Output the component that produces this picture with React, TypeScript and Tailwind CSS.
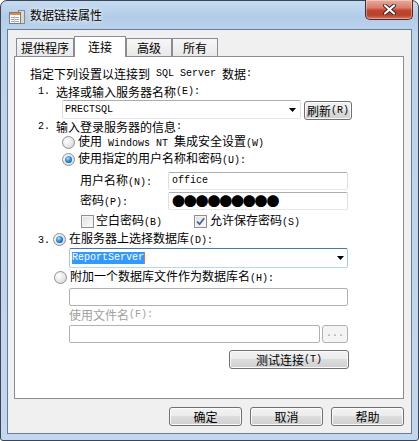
import type { ReactNode } from 'react';

// split text into CJK and ASCII runs; ASCII gets the narrow mono face (6px per char like SimSun)
function T({ s }: { s: string }) {
  const parts = s.split(/([\x20-\x7e]+)/).filter(Boolean);
  return (
    <>
      {parts.map((p, i) =>
        /^[\x20-\x7e]+$/.test(p) ? (
          <span key={i} className="whitespace-pre font-['Liberation_Mono',monospace] text-[10px]">
            {p}
          </span>
        ) : (
          <span key={i}>{p}</span>
        ),
      )}
    </>
  );
}

const btn =
  'flex items-center justify-center rounded-[3px] border border-[#707070] bg-[linear-gradient(to_bottom,#f2f2f2_0%,#ebebeb_50%,#dddddd_50%,#cfcfcf_100%)] shadow-[inset_0_0_0_1px_#fbfbfb] leading-[16px]';

const textBox =
  'rounded-[2px] border border-[#abadb3] border-l-[#dbdfe6] border-r-[#dbdfe6] border-b-[#e3e9ef] bg-white';

function Arrow() {
  return (
    <svg width="7" height="4" viewBox="0 0 7 4">
      <polygon points="0,0 7,0 3.5,4" fill="#000" />
    </svg>
  );
}

function Radio({ checked }: { checked?: boolean }) {
  return (
    <div className="flex h-[13px] w-[13px] shrink-0 items-center justify-center rounded-full border border-[#8f8f8f] bg-[radial-gradient(circle_at_35%_35%,#ffffff,#e4e4e4_60%,#cfcfcf)]">
      {checked && (
        <div className="h-[7px] w-[7px] rounded-full bg-[radial-gradient(circle_at_40%_35%,#a8e0ff,#2f8fdc_45%,#0d3a78)]" />
      )}
    </div>
  );
}

function Check({ checked }: { checked?: boolean }) {
  return (
    <div className="flex h-[13px] w-[13px] shrink-0 items-center justify-center border border-[#8f8f8f] bg-[linear-gradient(135deg,#dcdcdc,#ffffff)] shadow-[inset_0_0_0_1px_#f4f4f4]">
      {checked && (
        <svg width="11" height="11" viewBox="0 0 11 11">
          <path d="M2 5.5 L4.5 8.2 L9.2 2.2" stroke="#4d62a3" strokeWidth="1.8" fill="none" />
        </svg>
      )}
    </div>
  );
}

function Row({ className, children }: { className: string; children: ReactNode }) {
  return <div className={`flex items-center ${className}`}>{children}</div>;
}

function Tab({ label, active, w }: { label: string; active?: boolean; w: string }) {
  return active ? (
    <div
      className={`relative z-10 -mb-px flex h-[21px] items-center justify-center border border-b-0 border-[#898c95] bg-white leading-[16px] ${w}`}
    >
      {label}
    </div>
  ) : (
    <div
      className={`flex h-[18px] items-center justify-center self-end border border-b-0 border-[#898c95] bg-[linear-gradient(to_bottom,#f7f7f7,#e8e8e8)] leading-[16px] ${w}`}
    >
      {label}
    </div>
  );
}

function TitleIcon() {
  return (
    <svg width="18" height="16" viewBox="0 0 18 16">
      <rect x="10.5" y="1.5" width="6" height="13" fill="#d9d9d9" stroke="#8a8a8a" />
      <rect x="1.5" y="3.5" width="11" height="11" fill="#fff" stroke="#7a7a7a" />
      <rect x="2" y="4" width="10" height="2" fill="#e98a3a" />
      <line x1="3" y1="8.5" x2="11" y2="8.5" stroke="#9aa6b8" />
      <line x1="3" y1="10.5" x2="11" y2="10.5" stroke="#9aa6b8" />
      <line x1="3" y1="12.5" x2="11" y2="12.5" stroke="#9aa6b8" />
      <line x1="6.5" y1="7" x2="6.5" y2="14" stroke="#c9cfd8" />
    </svg>
  );
}

export default function App() {
  return (
    <div className="flex h-[441px] w-[419px] flex-col rounded-t-[7px] rounded-b-[3px] border border-[#3b4553] bg-[linear-gradient(to_bottom,#c6dbf1_0px,#b2cce8_16px,#bcd3ec_30px,#c3d8ee_100%)] font-['Noto_Sans_CJK_SC',sans-serif] text-[12px] text-black">
      {/* title bar */}
      <div className="flex h-[28px] shrink-0 items-start">
        <div className="ml-[7px] mt-[8px]">
          <TitleIcon />
        </div>
        <div className="ml-[4px] mt-[6px] leading-[16px] [text-shadow:0_0_6px_#fff,0_0_3px_#fff]">数据链接属性</div>
        <div className="ml-auto mr-[5px] -mt-px flex h-[20px] w-[48px] items-center justify-center rounded-b-[5px] border border-t-0 border-[#5a2520] bg-[linear-gradient(to_bottom,#e8ab9c,#d77f6b_40%,#c2452f_55%,#b8422c_80%,#d47a62)] shadow-[inset_0_0_0_1px_rgba(255,255,255,0.35)]">
          <svg width="13" height="11" viewBox="0 0 13 11">
            <path d="M2 1.5 L11 9.5 M11 1.5 L2 9.5" stroke="#3d2320" strokeWidth="4" strokeLinecap="round" />
            <path d="M2 1.5 L11 9.5 M11 1.5 L2 9.5" stroke="#fff" strokeWidth="2.2" strokeLinecap="round" />
          </svg>
        </div>
      </div>

      {/* client area */}
      <div className="ml-[6px] h-[405px] w-[405px] border border-[#6b7b91] bg-[#f0f0f0]">
        <div className="flex flex-col pl-[6px] pr-[7px] pt-[6px]">
          <div className="flex h-[20px] pl-[2px]">
            <Tab label="提供程序" w="w-[58px]" />
            <Tab label="连接" w="w-[52px]" active />
            <Tab label="高级" w="w-[46px]" />
            <Tab label="所有" w="w-[46px]" />
          </div>

          <div className="flex h-[343px] w-[390px] flex-col border border-[#898c95] bg-white">
            <Row className="ml-[15px] mt-[9px] h-[16px] leading-[16px]">
              <T s="指定下列设置以连接到 SQL Server 数据:" />
            </Row>
            <Row className="ml-[23px] mt-[2px] h-[16px] leading-[16px]">
              <T s="1. 选择或输入服务器名称(E):" />
            </Row>
            <div className="ml-[47px] flex h-[19px] items-start">
              <div className={`flex h-[19px] w-[239px] items-center justify-between pl-[2px] pr-[4px] ${textBox}`}>
                <span className="whitespace-pre font-['Liberation_Mono',monospace] text-[10px] leading-[14px]">PRECTSQL</span>
                <Arrow />
              </div>
              <div className={`ml-[3px] mt-[1px] h-[19px] w-[48px] ${btn}`}>
                <T s="刷新(R)" />
              </div>
            </div>
            <Row className="ml-[23px] h-[16px] leading-[16px]">
              <T s="2. 输入登录服务器的信息:" />
            </Row>
            <Row className="ml-[47px] h-[14px] leading-[14px]">
              <Radio />
              <span className="ml-[3px]">
                <T s="使用 Windows NT 集成安全设置(W)" />
              </span>
            </Row>
            <Row className="ml-[47px] mt-[3px] h-[14px] leading-[14px]">
              <Radio checked />
              <span className="ml-[3px]">
                <T s="使用指定的用户名称和密码(U):" />
              </span>
            </Row>
            <Row className="ml-[65px] mt-[6px] h-[18px] leading-[16px]">
              <span className="w-[88px]">
                <T s="用户名称(N):" />
              </span>
              <div className={`flex h-[18px] w-[180px] items-center pl-[3px] ${textBox}`}>
                <span className="whitespace-pre font-['Liberation_Mono',monospace] text-[10px] leading-[14px]">office</span>
              </div>
            </Row>
            <Row className="ml-[65px] mt-[2px] h-[18px] leading-[16px]">
              <span className="w-[88px]">
                <T s="密码(P):" />
              </span>
              <div className={`flex h-[18px] w-[180px] items-center pl-[3px] ${textBox}`}>
                <span className="text-[13px] leading-[14px] tracking-[-1.2px]">●●●●●●●●●</span>
              </div>
            </Row>
            <Row className="ml-[66px] mt-[4px] h-[14px] leading-[14px]">
              <div className="flex w-[113px] items-center">
                <Check />
                <span className="ml-[2px]">
                  <T s="空白密码(B)" />
                </span>
              </div>
              <Check checked />
              <span className="ml-[3px]">
                <T s="允许保存密码(S)" />
              </span>
            </Row>
            <Row className="ml-[23px] mt-[4px] h-[14px] leading-[14px]">
              <span className="w-[15px]">
                <T s="3." />
              </span>
              <Radio checked />
              <span className="ml-[3px]">
                <T s="在服务器上选择数据库(D):" />
              </span>
            </Row>
            <div className="ml-[54px] mt-[2px] flex h-[20px] w-[279px] items-center justify-between rounded-[2px] border border-[#3d7bad] border-l-[#a4c9e3] border-r-[#a4c9e3] border-b-[#b7d9ed] bg-white pl-[2px] pr-[3px]">
              <div className="flex h-[12px] items-center">
                <span className="bg-[#3399ff] whitespace-pre font-['Liberation_Mono',monospace] text-[10px] leading-[12px] text-white">
                  ReportServer
                </span>
                <span className="h-[12px] w-px bg-[#e07a1f]" />
              </div>
              <Arrow />
            </div>
            <Row className="ml-[39px] mt-[2px] h-[14px] leading-[14px]">
              <Radio />
              <span className="ml-[3px]">
                <T s="附加一个数据库文件作为数据库名(H):" />
              </span>
            </Row>
            <div className="ml-[54px] mt-[4px] h-[18px] w-[279px] rounded-[2px] border border-[#adb2b5] bg-white" />
            <Row className="ml-[54px] mt-[2px] h-[14px] leading-[14px] text-[#a0a0a0]">
              <T s="使用文件名(F):" />
            </Row>
            <div className="ml-[54px] mt-[3px] flex h-[18px]">
              <div className="h-[18px] w-[251px] rounded-[2px] border border-[#adb2b5] bg-white" />
              <div className="ml-[2px] flex h-[18px] w-[26px] items-center justify-center rounded-[3px] border border-[#adb2b5] bg-[#f4f4f4] font-['Liberation_Mono',monospace] text-[10px] leading-[14px] text-[#9a9a9a]">
                ...
              </div>
            </div>
            <div className={`ml-[214px] mt-[7px] h-[19px] w-[120px] ${btn}`}>
              <T s="测试连接(T)" />
            </div>
          </div>

          <div className="mt-[8px] flex justify-end gap-[8px]">
            <div className={`h-[19px] w-[73px] ${btn}`}>确定</div>
            <div className={`h-[19px] w-[73px] ${btn}`}>取消</div>
            <div className={`h-[19px] w-[73px] ${btn}`}>帮助</div>
          </div>
        </div>
      </div>
    </div>
  );
}
